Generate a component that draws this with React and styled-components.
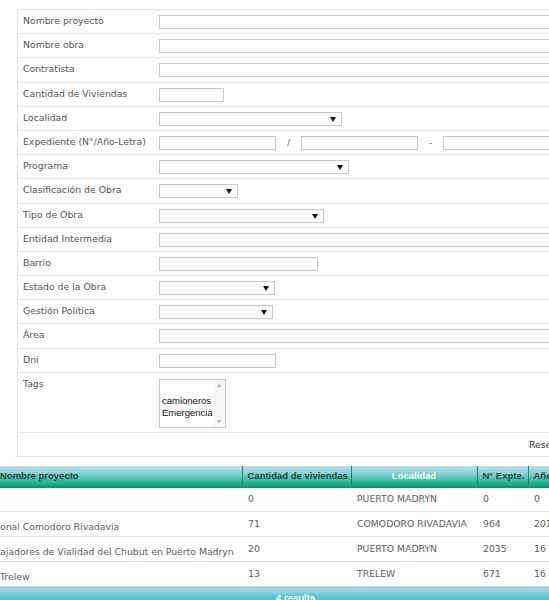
import React from "react";
import styled, { createGlobalStyle } from "styled-components";

const Global = createGlobalStyle`
  html, body { margin: 0; padding: 0; background: #fff; overflow: hidden; }
  body { font-family: "DejaVu Sans", Verdana, sans-serif; }
`;

const Page = styled.div`
  width: 549px;
  height: 600px;
  overflow: hidden;
  padding-top: 9px;
  box-sizing: border-box;
`;

const Panel = styled.div`
  margin-left: 17px;
  width: 545px;
  border: 1px solid #e4e4e4;
  background: #fff;
`;

const Row = styled.div`
  display: grid;
  grid-template-columns: 141px 1fr;
  height: ${(p) => p.$h || 24.2}px;
  box-sizing: border-box;
  border-bottom: 1px solid #e8e8e8;
`;

const Label = styled.div`
  padding: 4px 0 0 5px;
  font-size: 9.3px;
  line-height: 13px;
  color: #555;
  white-space: nowrap;
`;

const Field = styled.div`
  display: flex;
  align-items: flex-start;
  padding-top: 5px;
  min-width: 0;
`;

const TextBox = styled.input`
  box-sizing: border-box;
  height: 14px;
  width: ${(p) => (p.$w ? `${p.$w}px` : "calc(100% - 6px)")};
  border: 1px solid #c9c9c9;
  margin: 0;
  padding: 0 2px;
  background: #fff;
  font-size: 9px;
  outline: none;
`;

const SelectBox = styled.div`
  position: relative;
  box-sizing: border-box;
  height: 14px;
  width: ${(p) => p.$w}px;
  border: 1px solid #c9c9c9;
  background: #fff;
`;

const Arrow = styled.svg`
  position: absolute;
  right: 5px;
  top: 4px;
`;

const Sep = styled.span`
  width: 25px;
  text-align: center;
  font-size: 9.3px;
  line-height: 14px;
  color: #666;
`;

const ListBox = styled.div`
  position: relative;
  box-sizing: border-box;
  width: 67px;
  height: 49px;
  margin-top: 1px;
  border: 1px solid #c6c6c6;
  background: #fff;
  padding: 3px 0 0 2px;
  font-family: "Liberation Sans", Arial, sans-serif;
  font-size: 9.5px;
  line-height: 12px;
  color: #111;
`;

const Option = styled.div`
  height: 12px;
  white-space: nowrap;
`;

const ScrollBar = styled.div`
  position: absolute;
  top: 0;
  right: 0;
  bottom: 0;
  width: 11px;
  background: #f7f7f7;
  display: flex;
  flex-direction: column;
  justify-content: space-between;
  align-items: center;
  padding: 4px 0;
  box-sizing: border-box;
`;

const ButtonRow = styled.div`
  display: flex;
  justify-content: flex-end;
  align-items: center;
  height: 23px;
  padding-right: 8px;
  font-size: 9.3px;
  color: #333;
`;

const TableWrap = styled.div`
  margin-top: 9px;
  width: 600px;
`;

const Table = styled.table`
  border-collapse: collapse;
  table-layout: fixed;
  width: 600px;
`;

const Th = styled.th`
  height: 21px;
  padding: 0 ${(p) => (p.$first ? 0 : 5)}px;
  box-sizing: border-box;
  text-align: ${(p) => (p.$center ? "center" : "left")};
  font-family: "Liberation Sans", Arial, sans-serif;
  font-weight: bold;
  font-size: 9.5px;
  color: ${(p) => (p.$active ? "#fff" : "#24453d")};
  background: linear-gradient(#bfe1f1 0%, #7fcfd0 40%, #1fb68f 85%, #14a57f 100%);
  border-bottom: 2px solid #0f9872;
  border-right: 1px solid #2b7f6e;
  white-space: nowrap;
  overflow: hidden;
`;

const Td = styled.td`
  height: 25px;
  box-sizing: border-box;
  padding: ${(p) => (p.$first ? "5px 0 0 0" : "0 5px 2px 6px")};
  font-size: 9.3px;
  color: #5e5e5e;
  border-bottom: 1px solid #e2e2e2;
  white-space: nowrap;
  overflow: hidden;
  vertical-align: middle;
`;

const Footer = styled.td`
  height: 14px;
  padding: 3px 0 0 276px;
  font-family: "Liberation Sans", Arial, sans-serif;
  font-weight: bold;
  font-size: 9.5px;
  color: #fff;
  background: linear-gradient(#b3dbee 0%, #6cc8d3 45%, #3cbcc0 100%);
  white-space: nowrap;
`;

const Tri = () => (
  <Arrow width="6" height="5" viewBox="0 0 6 5">
    <polygon points="0,0 6,0 3,5" fill="#111" />
  </Arrow>
);

const Sel = ({ w }) => (
  <SelectBox $w={w}>
    <Tri />
  </SelectBox>
);

const rows = [
  { label: "Nombre proyecto", field: <TextBox /> },
  { label: "Nombre obra", field: <TextBox /> },
  { label: "Contratista", field: <TextBox /> },
  { label: "Cantidad de Viviendas", field: <TextBox $w={65} /> },
  { label: "Localidad", field: <Sel w={183} /> },
  {
    label: "Expediente (N°/Año-Letra)",
    field: (
      <>
        <TextBox $w={117} />
        <Sep>/</Sep>
        <TextBox $w={117} />
        <Sep>-</Sep>
        <TextBox $w={117} />
      </>
    ),
  },
  { label: "Programa", field: <Sel w={190} /> },
  { label: "Clasificación de Obra", field: <Sel w={79} /> },
  { label: "Tipo de Obra", field: <Sel w={165} /> },
  { label: "Entidad Intermedia", field: <TextBox /> },
  { label: "Barrio", field: <TextBox $w={159} /> },
  { label: "Estado de la Obra", field: <Sel w={116} /> },
  { label: "Gestión Política", field: <Sel w={114} /> },
  { label: "Área", field: <TextBox /> },
  { label: "Dni", field: <TextBox $w={117} /> },
];

const data = [
  ["", "0", "PUERTO MADRYN", "0", "0"],
  ["onal Comodoro Rivadavia", "71", "COMODORO RIVADAVIA", "964", "2016"],
  ["ajadores de Vialidad del Chubut en Puerto Madryn", "20", "PUERTO MADRYN", "2035", "16"],
  ["Trelew", "13", "TRELEW", "671", "16"],
];

export default function App() {
  return (
    <Page>
      <Global />
      <Panel>
        {rows.map((r) => (
          <Row key={r.label}>
            <Label>{r.label}</Label>
            <Field>{r.field}</Field>
          </Row>
        ))}
        <Row $h={60}>
          <Label>Tags</Label>
          <Field>
            <ListBox>
              <Option>&nbsp;</Option>
              <Option>camioneros</Option>
              <Option>Emergencia</Option>
              <ScrollBar>
                <svg width="5" height="3" viewBox="0 0 5 3">
                  <polygon points="0,3 5,3 2.5,0" fill="#b5b5b5" />
                </svg>
                <svg width="5" height="3" viewBox="0 0 5 3">
                  <polygon points="0,0 5,0 2.5,3" fill="#b5b5b5" />
                </svg>
              </ScrollBar>
            </ListBox>
          </Field>
        </Row>
        <ButtonRow>Reset</ButtonRow>
      </Panel>
      <TableWrap>
        <Table>
          <colgroup>
            <col style={{ width: 242 }} />
            <col style={{ width: 109 }} />
            <col style={{ width: 126 }} />
            <col style={{ width: 51 }} />
            <col style={{ width: 72 }} />
          </colgroup>
          <thead>
            <tr>
              <Th $first>Nombre proyecto</Th>
              <Th>Cantidad de viviendas</Th>
              <Th $center $active>Localidad</Th>
              <Th>N° Expte.</Th>
              <Th>Año</Th>
            </tr>
          </thead>
          <tbody>
            {data.map((d, i) => (
              <tr key={i}>
                {d.map((c, j) => (
                  <Td key={j} $first={j === 0}>
                    {c}
                  </Td>
                ))}
              </tr>
            ))}
            <tr>
              <Footer colSpan={5}>4 results</Footer>
            </tr>
          </tbody>
        </Table>
      </TableWrap>
    </Page>
  );
}
